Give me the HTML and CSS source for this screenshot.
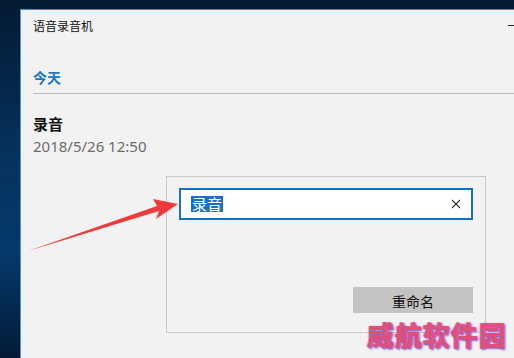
FILE: index.html
```html
<!DOCTYPE html>
<html lang="zh">
<head>
<meta charset="utf-8">
<link rel="stylesheet" href="styles.css">
</head>
<body>
<div class="desktop">
  <div class="window">
    <div class="titlebar">
      <span class="title">语音录音机</span>
      <span class="minimize"></span>
    </div>
    <div class="section">今天</div>
    <div class="item">
      <div class="item-name">录音</div>
      <div class="item-date">2018/5/26 12:50</div>
    </div>
  </div>
  <div class="flyout">
    <div class="input">
      <span class="sel">录音</span>
      <svg class="clear" width="10" height="10" viewBox="0 0 10 10"><path d="M1 1L9 9M9 1L1 9" stroke="#333" stroke-width="1.1" fill="none"/></svg>
    </div>
    <div class="actions">
      <div class="btn">重命名</div>
    </div>
  </div>
  <svg class="arrow" width="514" height="358" viewBox="0 0 514 358">
    <path d="M28 251 L159 211 L156 219 L178 204 L153 199 L157 206 Z" fill="#f03a3a"/>
  </svg>
  <div class="watermark">威航软件园</div>
</div>
</body>
</html>
```
FILE: styles.css
```css
* { box-sizing: border-box; }
html, body { margin: 0; padding: 0; }
body { width: 514px; height: 358px; overflow: hidden; font-family: "Noto Sans CJK SC", sans-serif; }
.desktop {
  position: relative;
  width: 514px; height: 358px;
  padding: 9px 0 0 20px;
  background: linear-gradient(180deg, #031a33 0%, #06325e 45%, #04396b 70%, #021a36 100%);
}
.window {
  height: 349px;
  background: #f2f2f2;
  border-top: 1px solid #3b8ad6;
  border-left: 1px solid #4b98dc;
  padding-left: 12px;
}
.titlebar {
  height: 33px;
  display: flex;
  align-items: center;
  justify-content: space-between;
  padding-bottom: 2px;
}
.title { font-size: 12px; color: #111; line-height: 1; }
.minimize { width: 6px; height: 1px; background: #222; }
.section {
  margin-top: 20px;
  height: 31px;
  padding-top: 4px;
  font-size: 14px;
  font-weight: bold;
  color: #1b78c4;
  line-height: 20px;
  border-bottom: 1px solid #bdbdbd;
}
.item { padding-top: 20px; }
.item-name { font-size: 15px; font-weight: bold; color: #111; line-height: 20px; }
.item-date { font-family: "Noto Sans", "Open Sans", sans-serif; font-size: 15px; color: #6b6b6b; line-height: 20px; margin-top: 2px; }
.flyout {
  position: absolute;
  left: 166px; top: 176px;
  width: 320px; height: 157px;
  background: #f2f2f2;
  border: 1px solid #c8c8c8;
  padding: 11px 12px 0 12px;
  display: flex;
  flex-direction: column;
}
.input {
  height: 32px;
  background: #fff;
  border: 2px solid #1470c4;
  display: flex;
  align-items: center;
  justify-content: space-between;
  padding: 0 10px;
}
.sel {
  background: #1b6fc6;
  color: #fff;
  font-size: 15px;
  line-height: 16px;
  padding: 0 1px;
}
.actions { display: flex; justify-content: flex-end; margin-top: 67px; }
.btn {
  width: 120px; height: 26px;
  background: #c3c3c3;
  font-size: 14px; color: #111;
  display: flex; align-items: center; justify-content: center;
  padding-top: 2px;
}
.arrow { position: absolute; left: 0; top: 0; pointer-events: none; }
.watermark {
  position: absolute;
  left: 367px; top: 318px;
  font-size: 27px; font-weight: 900;
  letter-spacing: 1px;
  color: #e0507a;
  text-shadow: 1px 1px 2px #6a5adf, -1px 0 1px #e86a8a;
  line-height: 34px;
}
```
